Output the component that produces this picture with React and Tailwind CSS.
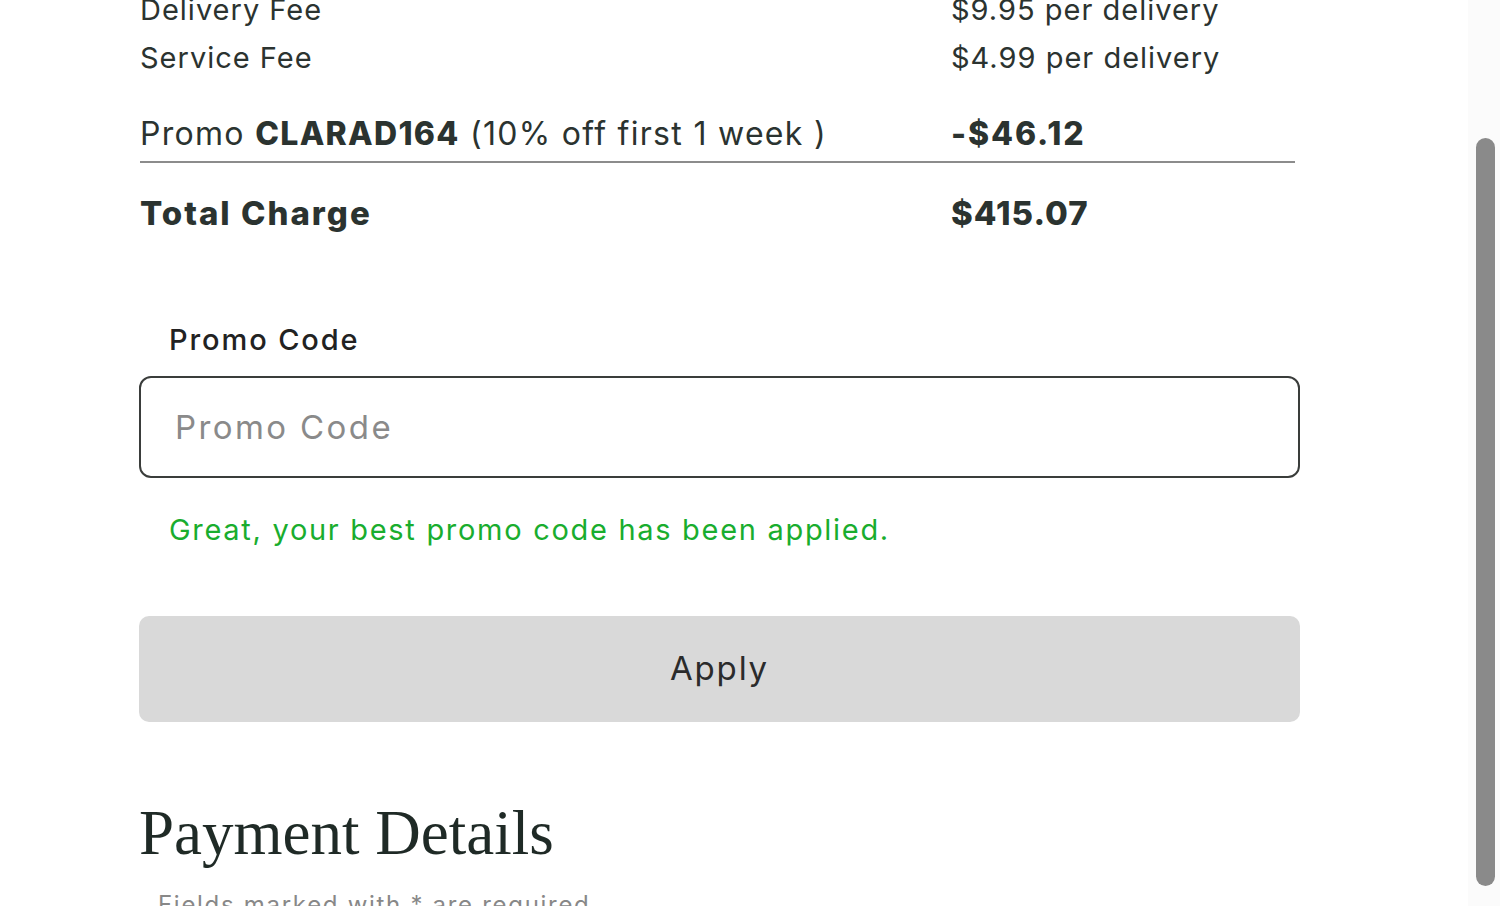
import React from 'react';

const sans = { fontFamily: 'Inter, "Noto Sans", sans-serif' };

const Row = ({ label, value, className = '' }) => (
    <div className={`grid grid-cols-[811px_1fr] ${className}`}>
        <div>{label}</div>
        <div>{value}</div>
    </div>
);

export default function App() {
    return (
        <div className="relative h-[906px] w-[1500px] overflow-hidden bg-white text-[#2b3330]" style={sans}>
            {/* summary block, scrolled so the first row is cut off */}
            <div className="-mt-[14px] pl-[140px] pr-[205px]">
                <div className="text-[29px] leading-[48px] tracking-[1px]">
                    <Row label="Delivery Fee" value="$9.95 per delivery" />
                    <Row label="Service Fee" value="$4.99 per delivery" />
                </div>

                <div className="mt-[28px] border-b-2 border-[#8c8c8c] pb-[3px] text-[32px] leading-[48px] tracking-[1.3px]">
                    <Row
                        label={
                            <span>
                                Promo <span className="font-extrabold">CLARAD164</span> (10% off first 1 week )
                            </span>
                        }
                        value={<span className="font-extrabold tracking-[1.9px]">-$46.12</span>}
                    />
                </div>

                <div className="mt-[26px] text-[33px] font-extrabold leading-[48px]">
                    <Row
                        label={<span className="tracking-[2px]">Total Charge</span>}
                        value={<span className="tracking-[1px]">$415.07</span>}
                    />
                </div>
            </div>

            {/* promo code form */}
            <div className="mt-[83px] w-[1161px] ml-[139px]">
                <label className="block pl-[30px] text-[29px] font-medium leading-[40px] tracking-[1.9px] text-[#222]">
                    Promo Code
                </label>
                <input
                    className="mt-[16px] block h-[102px] w-full rounded-[12px] border-2 border-[#3a3d3b] px-[34px] text-[33px] tracking-[2.4px] text-[#333] outline-none placeholder:text-[#8a8a8a]"
                    placeholder="Promo Code"
                />
                <p className="mt-[32px] pl-[30px] text-[29px] leading-[40px] tracking-[1.7px] text-[#19ad2e]">
                    Great, your best promo code has been applied.
                </p>
                <button className="mt-[66px] flex h-[106px] w-full items-center justify-center rounded-[10px] bg-[#d9d9d9] text-[33px] tracking-[1.8px] text-[#2b2b2b]">
                    Apply
                </button>

                <h2
                    className="mt-[75px] text-[63px] leading-[72px] text-[#1f2a26]"
                    style={{ fontFamily: '"Liberation Serif", "DejaVu Serif", serif' }}
                >
                    Payment Details
                </h2>
                <p className="mt-[21px] pl-[19px] text-[24px] leading-[30px] tracking-[1.7px] text-[#888]">
                    Fields marked with * are required
                </p>
            </div>

            {/* overlay scrollbar */}
            <div className="absolute right-0 top-0 h-full w-[32px] bg-[#fbfbfb]">
                <div className="absolute left-[8px] top-[138px] h-[748px] w-[19px] rounded-full bg-[#8a8a8a]" />
            </div>
        </div>
    );
}
